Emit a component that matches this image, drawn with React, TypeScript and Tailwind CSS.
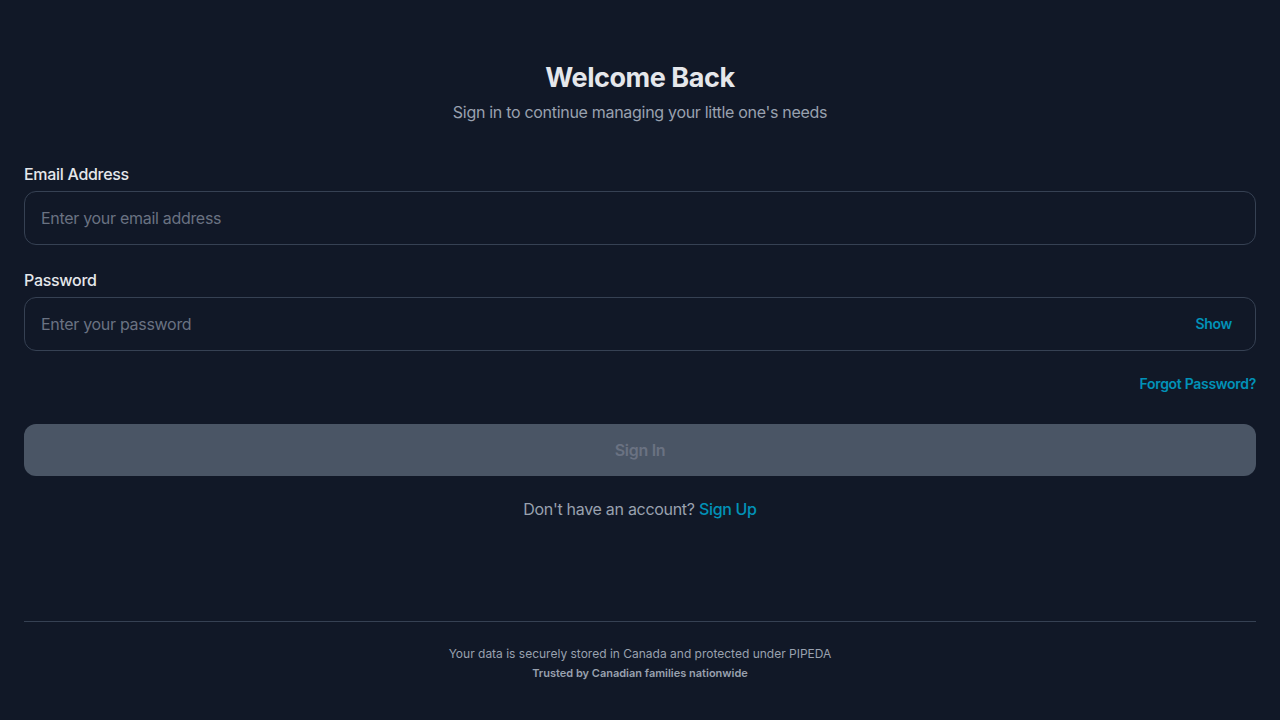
import { useState } from 'react';

const App = () => {
  const [showPassword, setShowPassword] = useState(false);

  return (
    <div className="min-h-screen bg-[#111827] font-['Inter',sans-serif] px-6 pt-[60px] tracking-[-0.3px]">
      {/* Header */}
      <div className="text-center">
        <h1 className="text-[27px] leading-[36px] font-bold text-gray-200 tracking-[-0.45px]">Welcome Back</h1>
        <p className="mt-1 text-base leading-6 text-gray-400">
          Sign in to continue managing your little one's needs
        </p>
      </div>

      {/* Form */}
      <form className="mt-[38px]" onSubmit={(e) => e.preventDefault()}>
        <label className="block text-base leading-6 font-medium text-gray-200 mb-[5px]">
          Email Address
        </label>
        <input
          type="email"
          placeholder="Enter your email address"
          className="w-full h-[54px] px-4 rounded-xl border border-gray-700 bg-transparent text-base text-gray-200 placeholder:text-gray-500 outline-none"
        />

        <label className="block mt-[23px] text-base leading-6 font-medium text-gray-200 mb-[5px]">
          Password
        </label>
        <div className="relative">
          <input
            type={showPassword ? 'text' : 'password'}
            placeholder="Enter your password"
            className="w-full h-[54px] pl-4 pr-20 rounded-xl border border-gray-700 bg-transparent text-base text-gray-200 placeholder:text-gray-500 outline-none"
          />
          <button
            type="button"
            onClick={() => setShowPassword(!showPassword)}
            className="absolute right-6 top-1/2 -translate-y-1/2 text-sm font-semibold text-cyan-600"
          >
            {showPassword ? 'Hide' : 'Show'}
          </button>
        </div>

        <div className="mt-[23px] flex justify-end">
          <a href="#" className="text-sm leading-5 font-semibold text-cyan-600">
            Forgot Password?
          </a>
        </div>

        <button
          type="submit"
          disabled
          className="mt-[30px] w-full h-[52px] rounded-xl bg-gray-600 text-base font-semibold text-gray-500"
        >
          Sign In
        </button>

        <p className="mt-[21px] text-center text-base leading-6 text-gray-400">
          Don't have an account? <a href="#" className="text-cyan-600 font-medium">Sign Up</a>
        </p>
      </form>

      {/* Footer */}
      <div className="mt-[100px] border-t border-gray-700 pt-6 text-center tracking-normal">
        <p className="text-xs leading-4 text-gray-400">
          Your data is securely stored in Canada and protected under PIPEDA
        </p>
        <p className="mt-[3px] text-[11px] leading-4 font-semibold text-gray-400">
          Trusted by Canadian families nationwide
        </p>
      </div>
    </div>
  );
};

export default App;
